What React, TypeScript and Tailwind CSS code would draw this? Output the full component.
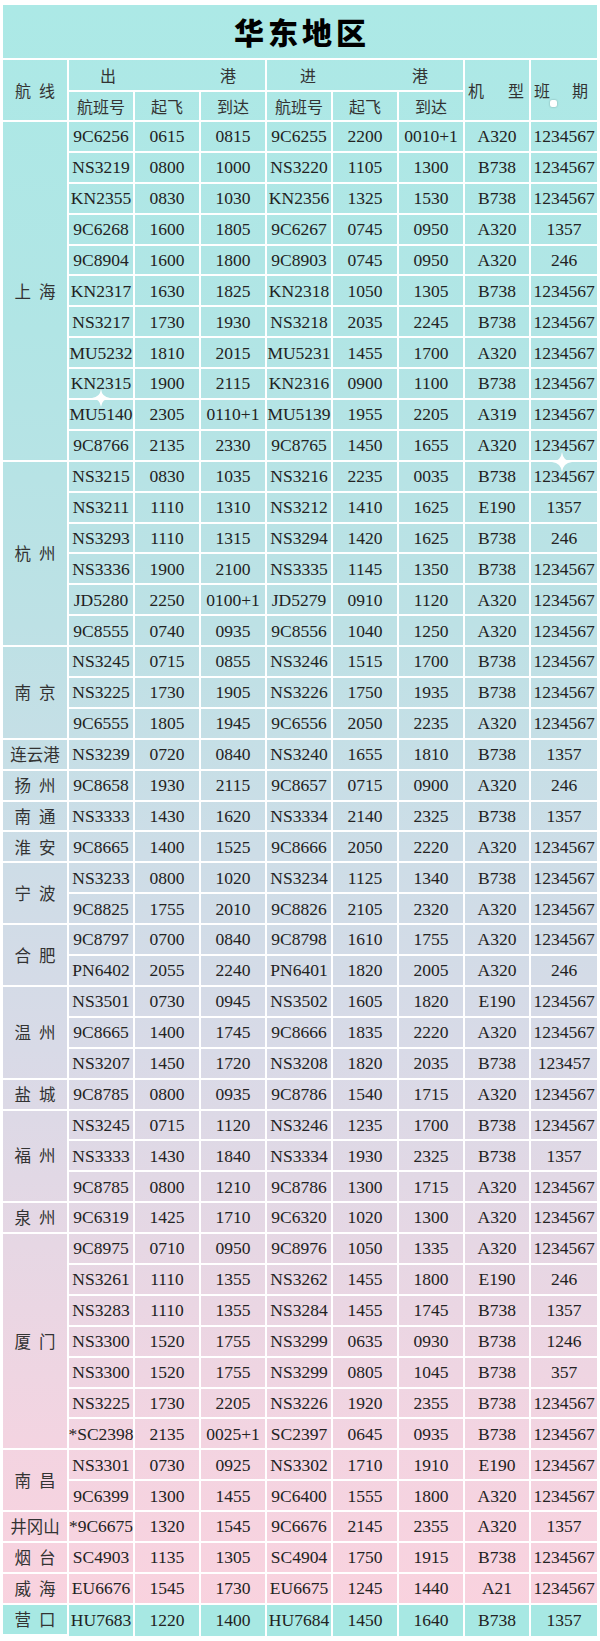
import React from "react";

type Row = string[];
const groups: [string, Row[]][] = [
  ["上海", [
    ["9C6256", "0615", "0815", "9C6255", "2200", "0010+1", "A320", "1234567"],
    ["NS3219", "0800", "1000", "NS3220", "1105", "1300", "B738", "1234567"],
    ["KN2355", "0830", "1030", "KN2356", "1325", "1530", "B738", "1234567"],
    ["9C6268", "1600", "1805", "9C6267", "0745", "0950", "A320", "1357"],
    ["9C8904", "1600", "1800", "9C8903", "0745", "0950", "A320", "246"],
    ["KN2317", "1630", "1825", "KN2318", "1050", "1305", "B738", "1234567"],
    ["NS3217", "1730", "1930", "NS3218", "2035", "2245", "B738", "1234567"],
    ["MU5232", "1810", "2015", "MU5231", "1455", "1700", "A320", "1234567"],
    ["KN2315", "1900", "2115", "KN2316", "0900", "1100", "B738", "1234567"],
    ["MU5140", "2305", "0110+1", "MU5139", "1955", "2205", "A319", "1234567"],
    ["9C8766", "2135", "2330", "9C8765", "1450", "1655", "A320", "1234567"],
  ]],
  ["杭州", [
    ["NS3215", "0830", "1035", "NS3216", "2235", "0035", "B738", "1234567"],
    ["NS3211", "1110", "1310", "NS3212", "1410", "1625", "E190", "1357"],
    ["NS3293", "1110", "1315", "NS3294", "1420", "1625", "B738", "246"],
    ["NS3336", "1900", "2100", "NS3335", "1145", "1350", "B738", "1234567"],
    ["JD5280", "2250", "0100+1", "JD5279", "0910", "1120", "A320", "1234567"],
    ["9C8555", "0740", "0935", "9C8556", "1040", "1250", "A320", "1234567"],
  ]],
  ["南京", [
    ["NS3245", "0715", "0855", "NS3246", "1515", "1700", "B738", "1234567"],
    ["NS3225", "1730", "1905", "NS3226", "1750", "1935", "B738", "1234567"],
    ["9C6555", "1805", "1945", "9C6556", "2050", "2235", "A320", "1234567"],
  ]],
  ["连云港", [["NS3239", "0720", "0840", "NS3240", "1655", "1810", "B738", "1357"]]],
  ["扬州", [["9C8658", "1930", "2115", "9C8657", "0715", "0900", "A320", "246"]]],
  ["南通", [["NS3333", "1430", "1620", "NS3334", "2140", "2325", "B738", "1357"]]],
  ["淮安", [["9C8665", "1400", "1525", "9C8666", "2050", "2220", "A320", "1234567"]]],
  ["宁波", [
    ["NS3233", "0800", "1020", "NS3234", "1125", "1340", "B738", "1234567"],
    ["9C8825", "1755", "2010", "9C8826", "2105", "2320", "A320", "1234567"],
  ]],
  ["合肥", [
    ["9C8797", "0700", "0840", "9C8798", "1610", "1755", "A320", "1234567"],
    ["PN6402", "2055", "2240", "PN6401", "1820", "2005", "A320", "246"],
  ]],
  ["温州", [
    ["NS3501", "0730", "0945", "NS3502", "1605", "1820", "E190", "1234567"],
    ["9C8665", "1400", "1745", "9C8666", "1835", "2220", "A320", "1234567"],
    ["NS3207", "1450", "1720", "NS3208", "1820", "2035", "B738", "123457"],
  ]],
  ["盐城", [["9C8785", "0800", "0935", "9C8786", "1540", "1715", "A320", "1234567"]]],
  ["福州", [
    ["NS3245", "0715", "1120", "NS3246", "1235", "1700", "B738", "1234567"],
    ["NS3333", "1430", "1840", "NS3334", "1930", "2325", "B738", "1357"],
    ["9C8785", "0800", "1210", "9C8786", "1300", "1715", "A320", "1234567"],
  ]],
  ["泉州", [["9C6319", "1425", "1710", "9C6320", "1020", "1300", "A320", "1234567"]]],
  ["厦门", [
    ["9C8975", "0710", "0950", "9C8976", "1050", "1335", "A320", "1234567"],
    ["NS3261", "1110", "1355", "NS3262", "1455", "1800", "E190", "246"],
    ["NS3283", "1110", "1355", "NS3284", "1455", "1745", "B738", "1357"],
    ["NS3300", "1520", "1755", "NS3299", "0635", "0930", "B738", "1246"],
    ["NS3300", "1520", "1755", "NS3299", "0805", "1045", "B738", "357"],
    ["NS3225", "1730", "2205", "NS3226", "1920", "2355", "B738", "1234567"],
    ["*SC2398", "2135", "0025+1", "SC2397", "0645", "0935", "B738", "1234567"],
  ]],
  ["南昌", [
    ["NS3301", "0730", "0925", "NS3302", "1710", "1910", "E190", "1234567"],
    ["9C6399", "1300", "1455", "9C6400", "1555", "1800", "A320", "1234567"],
  ]],
  ["井冈山", [["*9C6675", "1320", "1545", "9C6676", "2145", "2355", "A320", "1357"]]],
  ["烟台", [["SC4903", "1135", "1305", "SC4904", "1750", "1915", "B738", "1234567"]]],
  ["威海", [["EU6676", "1545", "1730", "EU6675", "1245", "1440", "A21", "1234567"]]],
  ["营口", [["HU7683", "1220", "1400", "HU7684", "1450", "1640", "B738", "1357"]]],
];

const spanClass: Record<number, string> = {
  1: "row-span-1",
  2: "row-span-2",
  3: "row-span-3",
  6: "row-span-6",
  7: "row-span-7",
  11: "row-span-11",
};

const SERIF = "font-['Liberation_Serif','Noto_Sans_CJK_SC',serif]";
const CJK = "font-['Noto_Sans_CJK_SC',sans-serif]";

function City({ name }: { name: string }) {
  const chars = name.split("");
  return (
    <span className={chars.length === 2 ? "flex gap-[8px]" : "flex"}>
      {chars.map((c, i) => (
        <span key={i}>{c}</span>
      ))}
    </span>
  );
}

function Sparkle({ className }: { className: string }) {
  return (
    <svg className={className} viewBox="0 0 20 20">
      <path d="M10 0 Q11 9 20 10 Q11 11 10 20 Q9 11 0 10 Q9 9 10 0Z" fill="#ffffff" />
    </svg>
  );
}

export default function App() {
  const cells: React.ReactNode[] = [];
  groups.forEach(([city, rows], gi) => {
    const last = city === "营口";
    const bg = last ? "bg-[#a7e8e3]" : "";
    cells.push(
      <div
        key={`c${gi}`}
        className={`${CJK} col-start-1 ${spanClass[rows.length]} ${bg} border-r-2 border-b-2 border-white flex items-center justify-center text-[16.5px] text-[#333]`}
      >
        <City name={city} />
      </div>
    );
    rows.forEach((r, ri) => {
      r.forEach((v, ci) => {
        cells.push(
          <div
            key={`d${gi}-${ri}-${ci}`}
            className={`${SERIF} ${bg} ${ci === 7 ? "" : "border-r-2"} ${last ? "" : "border-b-2"} border-white flex items-center justify-center text-[17.5px] text-[#222] whitespace-nowrap`}
          >
            {v}
          </div>
        );
      });
    });
  });

  const head = `${CJK} border-white flex items-center text-[16px] text-[#333]`;

  return (
    <div className="w-[600px] h-[1641px] bg-white pt-[5px] pl-[3px] relative">
      <div className="grid grid-cols-[repeat(9,66px)] grid-rows-[55px_32px_30px_repeat(49,30.9px)] w-[594px] bg-[linear-gradient(to_bottom,#ace9e6_0%,#b1e5e5_20%,#bde1e5_38%,#cddde7_52%,#d8dae7_64%,#e6d7e4_76%,#f3d4e1_88%,#fad2de_100%)]">
        <div
          className={`${CJK} col-span-9 border-b-2 border-white flex items-center justify-center text-[30px] font-black tracking-[4px] text-black pl-[4px]`}
        >
          华东地区
        </div>
        <div className={`${head} row-span-2 border-r-2 border-b-2 justify-center`}>
          <City name="航线" />
        </div>
        <div className={`${head} col-span-3 border-r-2 border-b-2 justify-between pl-[31px] pr-[29px]`}>
          <span>出</span>
          <span>港</span>
        </div>
        <div className={`${head} col-span-3 border-r-2 border-b-2 justify-between pl-[33px] pr-[35px]`}>
          <span>进</span>
          <span>港</span>
        </div>
        <div className={`${head} row-span-2 border-r-2 border-b-2 justify-between pl-[3px] pr-[5px]`}>
          <span>机</span>
          <span>型</span>
        </div>
        <div className={`${head} row-span-2 border-b-2 justify-between pl-[3px] pr-[9px]`}>
          <span>班</span>
          <span>期</span>
        </div>
        {["航班号", "起飞", "到达", "航班号", "起飞", "到达"].map((t, i) => (
          <div key={i} className={`${head} border-r-2 border-b-2 justify-center`}>
            {t}
          </div>
        ))}
        {cells}
      </div>
      <Sparkle className="absolute left-[92px] top-[389px] w-[18px] h-[18px]" />
      <Sparkle className="absolute left-[552px] top-[452px] w-[20px] h-[20px]" />
      <div className="absolute left-[550px] top-[100px] w-[7px] h-[7px] rounded-[2px] bg-white shadow-[0_0_2px_rgba(0,0,0,0.3)]" />
    </div>
  );
}
